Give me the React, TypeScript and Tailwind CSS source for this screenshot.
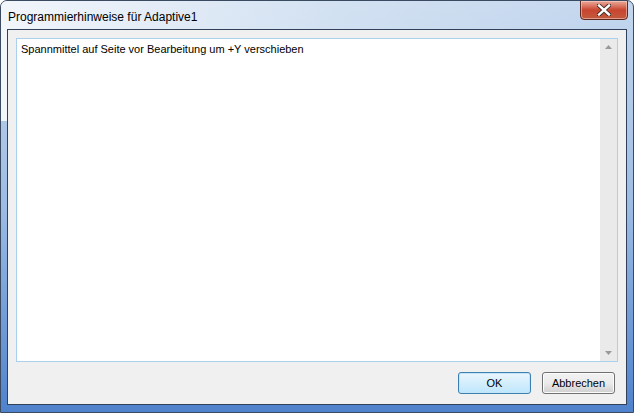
export default function App() {
  return (
    <div
      className="w-[634px] h-[413px] relative overflow-hidden rounded-t-[7px] border border-[#3a4a60] bg-gradient-to-b from-[#c4d7ee] via-[#9dbce4] to-[#4f82cc] flex flex-col"
      style={{ fontFamily: '"Liberation Sans", Arial, sans-serif' }}
    >
      {/* glass highlight over the title */}
      <div className="absolute inset-x-0 top-0 h-[120px] bg-gradient-to-r from-[#f2f6fb] via-[#dbe7f4]/70 to-transparent pointer-events-none" />

      <div className="relative h-[28px] flex items-start shrink-0">
        <span className="pl-[7px] pt-[9px] text-[12px] leading-[14px] text-black">Programmierhinweise für Adaptive1</span>
        <div className="ml-auto mr-[5px] -mt-px w-[48px] h-[20px] rounded-b-[4px] border border-[#5c2a22] bg-gradient-to-b from-[#e9a99a] via-[#c9452f] to-[#c25a3d] flex items-center justify-center shadow-[inset_0_0_0_1px_rgba(255,220,210,0.5)]">
          <svg width="14" height="12" viewBox="0 0 14 12">
            <path d="M2 1.5 L12 10.5 M12 1.5 L2 10.5" stroke="#3b2a28" strokeWidth="4.2" strokeLinecap="square" />
            <path d="M2 1.5 L12 10.5 M12 1.5 L2 10.5" stroke="#ffffff" strokeWidth="2.4" strokeLinecap="square" />
          </svg>
        </div>
      </div>

      <div className="relative flex-1 mx-[6px] mb-[7px] border border-[#2f4058] bg-[#f0f0f0] flex flex-col px-[8px] pt-[8px]">
        <div className="h-[324px] border border-[#a9d1ee] bg-white flex">
          <div className="flex-1 pl-[4px] pt-[3px] text-[11px] leading-[15px] text-black">
            Spannmittel auf Seite vor Bearbeitung um +Y verschieben
          </div>
          <div className="w-[17px] bg-[#eaeaea] flex flex-col items-center justify-between py-[6px]">
            <svg width="7" height="4" viewBox="0 0 7 4"><path d="M3.5 0 L7 4 L0 4 Z" fill="#9a9a9a" /></svg>
            <svg width="7" height="4" viewBox="0 0 7 4"><path d="M0 0 L7 0 L3.5 4 Z" fill="#9a9a9a" /></svg>
          </div>
        </div>
        <div className="flex justify-end gap-[11px] mt-[10px] pr-[3px]">
          <button className="w-[73px] h-[22px] rounded-[3px] border border-[#3c7fb1] bg-gradient-to-b from-[#eaf6fd] to-[#bee6fd] text-[11px] text-black shadow-[inset_0_0_0_1px_#c4e5f6]">OK</button>
          <button className="w-[73px] h-[22px] rounded-[3px] border border-[#707070] bg-gradient-to-b from-[#f2f2f2] via-[#ebebeb] to-[#cfcfcf] text-[11px] text-black shadow-[inset_0_0_0_1px_#fcfcfc]">Abbrechen</button>
        </div>
      </div>
    </div>
  );
}
